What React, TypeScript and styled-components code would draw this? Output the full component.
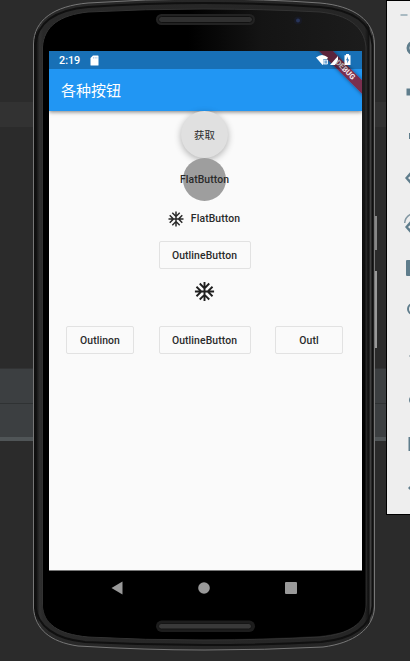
import React from "react";
import styled, { createGlobalStyle } from "styled-components";
import { MdAcUnit } from "react-icons/md";

const GlobalStyle = createGlobalStyle`
  * { box-sizing: border-box; }
  body { margin: 0; background: #2b2b2b; }
  button { margin: 0; cursor: pointer; }
`;

const Desktop = styled.div`
  position: relative;
  width: 410px;
  height: 661px;
  overflow: hidden;
  background: #2b2b2b;
  font-family: Roboto, "Noto Sans CJK SC", sans-serif;
`;

const Editor = styled.div`
  display: flex;
  flex-direction: column;
`;

const Band = styled.div<{ $height: number; $color: string }>`
  height: ${(p) => p.$height}px;
  background: ${(p) => p.$color};
`;

const Phone = styled.div`
  position: absolute;
  inset: 0;
  padding: 51px 0 0 49px;
`;

const Bezel = styled.svg`
  position: absolute;
  inset: 0;
`;

const Screen = styled.main`
  position: relative;
  width: 313px;
  height: 556px;
  overflow: hidden;
  display: flex;
  flex-direction: column;
  background: #fafafa;
`;

const StatusBar = styled.div`
  position: relative;
  z-index: 2;
  height: 18px;
  flex: none;
  display: flex;
  align-items: center;
  padding: 0 10px;
  background: rgba(0, 0, 0, 0.25);
  color: #fff;
  font-size: 10.8px;
  font-weight: 500;
`;

const Clock = styled.span`
  width: 31px;
`;

const StatusIcons = styled.svg`
  margin-left: auto;
`;

const AppBar = styled.header`
  height: 60px;
  flex: none;
  display: flex;
  align-items: center;
  margin-top: -18px;
  padding: 16px 0 0 12px;
  background: #2196f3;
  color: #fff;
  font: 400 15px "Noto Sans CJK SC", sans-serif;
  box-shadow: 0 1px 4px rgba(0, 0, 0, 0.5);
`;

const Content = styled.section`
  flex: 1;
  display: flex;
  flex-direction: column;
  align-items: center;
  padding-right: 2px;
`;

const label = `
  color: #2a2a2a;
  font-family: Roboto, "Noto Sans CJK SC", sans-serif;
  font-size: 10.4px;
  font-weight: 500;
  letter-spacing: 0.1px;
  white-space: nowrap;
`;

const RoundButton = styled.button<{ $size: number; $raised?: boolean }>`
  ${label}
  width: ${(p) => p.$size}px;
  height: ${(p) => p.$size}px;
  flex: none;
  display: flex;
  align-items: center;
  justify-content: center;
  padding: 0 0 1px;
  border: 0;
  border-radius: 50%;
  background: ${(p) => (p.$raised ? "#e0e0e0" : "#9e9e9e")};
  box-shadow: ${(p) => (p.$raised ? "0 2px 7px rgba(0, 0, 0, 0.3)" : "none")};
  font-weight: ${(p) => (p.$raised ? 400 : 500)};
`;

const FlatButton = styled.button`
  ${label}
  height: 40px;
  display: flex;
  align-items: center;
  gap: 6px;
  padding: 0 2px 5px 0;
  border: 0;
  background: none;
`;

const OutlineButton = styled.button<{ $width: number }>`
  ${label}
  width: ${(p) => p.$width}px;
  height: 28px;
  padding: 0;
  border: 1px solid #e2e2e2;
  border-radius: 2px;
  background: none;
`;

const IconButton = styled.button`
  height: 44px;
  display: flex;
  align-items: center;
  padding: 0;
  border: 0;
  background: none;
  color: #1f1f1f;
`;

const ButtonRow = styled.div`
  display: flex;
  gap: 24.5px;
  margin-top: 13px;
`;

const NavBar = styled.nav`
  height: 37px;
  flex: none;
  display: flex;
  justify-content: center;
  align-items: center;
  gap: 69px;
  padding: 0 3px 2px 0;
  background: #000;
  border-top: 1px solid #777;
`;

const DebugBanner = styled.div`
  position: absolute;
  top: 13px;
  right: -24px;
  width: 84px;
  height: 10px;
  transform: rotate(45deg);
  padding-left: 3px;
  background: rgba(139, 27, 48, 0.84);
  box-shadow: 0 0 4px rgba(0, 0, 0, 0.45);
  color: #f4e6e9;
  font-size: 7.6px;
  font-weight: 800;
  line-height: 10px;
  text-align: center;
`;

const ToolPanel = styled.aside`
  position: absolute;
  left: 386px;
  top: 0;
  width: 40px;
  height: 515px;
  border: 1px solid #000;
  background: #eeeeee;
`;

function DeviceBezel() {
  return (
    <Bezel width="410" height="661">
      <defs>
        <linearGradient id="side" x1="33" x2="375" y1="0" y2="0" gradientUnits="userSpaceOnUse">
          <stop offset="0" stopColor="#080808" />
          <stop offset="0.01" stopColor="#151515" />
          <stop offset="0.02" stopColor="#303030" />
          <stop offset="0.03" stopColor="#292929" />
          <stop offset="0.97" stopColor="#252525" />
          <stop offset="0.982" stopColor="#121212" />
          <stop offset="0.988" stopColor="#4a4a4a" />
          <stop offset="0.994" stopColor="#222" />
          <stop offset="1" stopColor="#666" />
        </linearGradient>
        <linearGradient id="face" x1="43" y1="20" x2="365" y2="20" gradientUnits="userSpaceOnUse">
          <stop offset="0.45" stopColor="#000" />
          <stop offset="0.68" stopColor="#141414" />
          <stop offset="1" stopColor="#1c1c1c" />
        </linearGradient>
        <linearGradient id="fade" x1="0" y1="100" x2="0" y2="440" gradientUnits="userSpaceOnUse">
          <stop offset="0" stopColor="#000" stopOpacity="0" />
          <stop offset="1" stopColor="#000" />
        </linearGradient>
      </defs>
      <rect x="374" y="216" width="3" height="34" fill="#888" />
      <rect x="374" y="271" width="3" height="77" fill="#999" />
      <path
        d="M33.5 608V44C34 20 54 6 88 3Q145 -1 204 -1Q265 -1 320 3C354 6 374 20 374.500 44V608C373 629 354 643 323 647Q265 650 204 650Q145 650 78 646C50 642 35 629 33.500 608Z"
        fill="url(#side)"
        stroke="#777"
      />
      <path
        d="M35.500 606V45C37 23 55 10 88 7Q145 3 204 3Q265 3 320 7C353 10 371 23 372.500 45V606C371 626 353 639 321 642Q265 645 204 645Q145 645 85 642C55 639 37 626 35.500 606Z"
        fill="none"
        stroke="#101010"
        strokeWidth="2"
      />
      <path
        d="M42.500 604V47C44 26 60 15 88 12Q145 9 204 9Q265 9 320 12C348 15 364 26 366 47V604C365 624 350 634 320 637Q265 640 204 640Q145 640 88 637C57 634 44 624 42.500 604Z"
        fill="url(#face)"
        stroke="#333"
      />
      <path d="M43 100H365.500V606C365 623 350 633 320 636Q265 639 204 639Q145 639 88 636C57 633 44 623 43 606Z" fill="url(#fade)" />
      <g>
        <rect x="156" y="14" width="99" height="11" rx="5.500" fill="#222" />
        <rect x="158.500" y="16.500" width="94" height="6" rx="3" fill="#303030" stroke="#111" />
        <rect x="156" y="620.500" width="99" height="11.500" rx="5.700" fill="#1d1d1d" />
        <rect x="158.500" y="623.500" width="93" height="5.500" rx="2.700" fill="#393939" stroke="#151515" />
        <circle cx="298" cy="20.500" r="4" fill="#181a24" />
        <circle cx="298" cy="20.500" r="2" fill="#27345a" />
      </g>
    </Bezel>
  );
}

function SdCard() {
  return (
    <svg width="9" height="11" viewBox="0 0 9 11">
      <path d="M3 0.500H8Q8.500 0.500 8.500 1V10Q8.500 10.500 8 10.500H1Q.5 10.500 .5 10V3Z" fill="#fff" />
      <path d="M3.500 2V3.600M5.200 2V3.600M6.900 2V3.600" stroke="#8fb8dd" strokeWidth=".7" />
    </svg>
  );
}

function EmulatorTools() {
  return (
    <svg width="24" height="513" viewBox="387 1 24 513" fill="none" stroke="#5f7d8c" strokeWidth="2">
      <path d="M400.500 15H407.500" stroke="#a9bac2" />
      <circle cx="414" cy="48" r="6" strokeWidth="3" />
      <path d="M406.500 92H412" strokeWidth="7" />
      <path d="M409 136H412" strokeWidth="6" />
      <path d="M405 178L411 171V185Z" fill="#5f7d8c" stroke="none" />
      <path d="M408 178L411 175.500V180.500Z" fill="#eee" stroke="none" />
      <path d="M404.700 223Q405 217 411 214" stroke="#8297a2" strokeWidth="1.500" />
      <path d="M405 227L411 220V234Z" fill="#5f7d8c" stroke="none" />
      <path d="M408 227L411 224.500V229.500Z" fill="#eee" stroke="none" />
      <rect x="406" y="260" width="10" height="16" rx="1" fill="#5f7d8c" stroke="none" />
      <circle cx="413" cy="309" r="5" />
      <path d="M409 356H411" stroke="#b9c2c6" />
      <circle cx="414" cy="400" r="4" />
      <path d="M412 438H409.500V450H412" />
      <path d="M408 488L411 485V491Z" fill="#5f7d8c" stroke="none" />
    </svg>
  );
}

export default function App() {
  return (
    <Desktop>
      <GlobalStyle />
      <Editor>
        <Band $height={102} $color="#2b2b2b" />
        <Band $height={25} $color="#323232" />
        <Band $height={241} $color="#2b2b2b" />
        <Band $height={1} $color="#323334" />
        <Band $height={34} $color="#3c3f41" />
        <Band $height={1} $color="#2f3233" />
        <Band $height={33} $color="#3c3f41" />
        <Band $height={4} $color="#505557" />
      </Editor>
      <Phone>
        <DeviceBezel />
        <Screen>
          <StatusBar>
            <Clock>2:19</Clock>
            <SdCard />
            <StatusIcons width="36" height="12" viewBox="0 0 36 12">
              <path d="M0 3.500Q6 -1.500 12 3.500L11 5H7.500V10.500L6.500 11Z" fill="#fff" />
              <path d="M8 6H11.500V10H8Z" fill="#75a8d7" stroke="#fff" strokeWidth=".8" />
              <path d="M14 11L22 2V6L19 11Z" fill="#fff" />
              <path d="M30 1.200V0H33V1.200H34.500V11H28.500V1.200Z" fill="#fff" />
              <path d="M32 2.500L30 6.300H31.400L31 9.500L33.200 5.500H31.800Z" fill="#1d71b7" />
            </StatusIcons>
          </StatusBar>
          <AppBar>各种按钮</AppBar>
          <Content>
            <RoundButton $size={47} $raised>获取</RoundButton>
            <RoundButton $size={43}>FlatButton</RoundButton>
            <FlatButton>
              <MdAcUnit size={18} />
              FlatButton
            </FlatButton>
            <OutlineButton $width={92}>OutlineButton</OutlineButton>
            <IconButton aria-label="snow">
              <MdAcUnit size={23} />
            </IconButton>
            <ButtonRow>
              <OutlineButton $width={68}>Outlinon</OutlineButton>
              <OutlineButton $width={92}>OutlineButton</OutlineButton>
              <OutlineButton $width={68}>Outl</OutlineButton>
            </ButtonRow>
          </Content>
          <NavBar>
            <svg width="12" height="14"><path d="M0.500 7L11.500 .5V13.500Z" fill="#999" /></svg>
            <svg width="24" height="14"><circle cx="12" cy="7" r="5.800" fill="#999" /></svg>
            <svg width="12" height="14"><rect y="1" width="12" height="12" rx="1" fill="#999" /></svg>
          </NavBar>
          <DebugBanner>DEBUG</DebugBanner>
        </Screen>
      </Phone>
      <ToolPanel>
        <EmulatorTools />
      </ToolPanel>
    </Desktop>
  );
}
